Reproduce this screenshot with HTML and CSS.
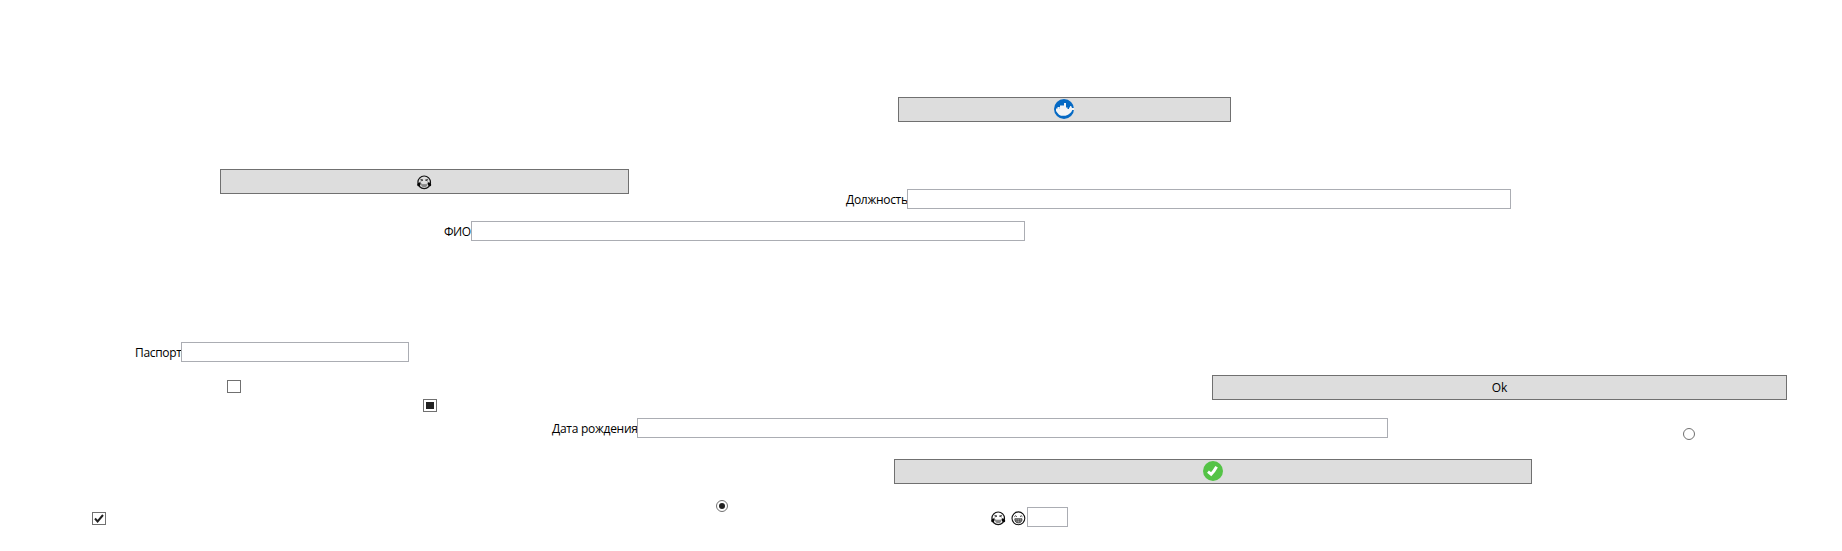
FILE: index.html
```html
<!DOCTYPE html>
<html lang="ru">
<head>
<meta charset="utf-8">
<title>Форма</title>
<link rel="stylesheet" href="styles.css">
</head>
<body>
<svg class="defs" width="0" height="0" aria-hidden="true">
  <symbol id="joy" viewBox="0 0 15 15">
    <circle cx="7.200" cy="7.300" r="6.300" fill="none" stroke="#111" stroke-width="1.200"/>
    <path d="M3.300 4.200 6 5.100 3.600 6M11.100 4.200 8.400 5.100 10.800 6" fill="none" stroke="#222" stroke-width=".8"/>
    <path d="M3.700 8h7c0 2.800-1.400 4.300-3.500 4.300S3.700 10.800 3.700 8z" fill="#888"/>
    <path d="M4.500 8.600h5.400" stroke="#eee" stroke-width=".9"/>
    <path d="M3.600 7.300C1.200 7.500.1 8.500.2 9.900c.1 1.300 2 1.700 2.900.6.500-.7.500-1.700.5-3.200zM10.800 7.300c2.400.2 3.500 1.200 3.400 2.600-.1 1.300-2 1.700-2.900.6-.5-.7-.5-1.700-.5-3.200z" fill="#050505"/>
  </symbol>
  <symbol id="grin" viewBox="0 0 15 15">
    <circle cx="7.400" cy="7.300" r="6.400" fill="none" stroke="#111" stroke-width="1.100"/>
    <path d="M3.400 5.700Q4.600 3.800 5.800 5.700M9 5.700Q10.200 3.800 11.400 5.700" fill="none" stroke="#222" stroke-width=".9"/>
    <path d="M3.800 7.800h7.200c0 2.900-1.600 4.100-3.600 4.100s-3.600-1.200-3.600-4.100z" fill="#aaa" stroke="#222" stroke-width=".8"/>
    <path d="M4 9.700h6.800M6.200 8v3.600M8.600 8v3.600" stroke="#333" stroke-width=".5"/>
  </symbol>
</svg>
<main class="canvas">
  <button class="button docker" aria-label="Docker">
    <svg width="20" height="20" viewBox="0 0 20 20"><circle cx="10" cy="10" r="10" fill="#0569c4"/><path d="M2 9.500h1.500V8H5v1h1V6.500h4V4h2v4.500h1V10h2V8.500h1V7l1.300.3.700 1.700H20v2h-1.700l-1 2-1.300 1.300-2 1.500-2.500 1H7l-2-1-1.700-2L2 12z" fill="#f2f4f6"/><path d="M13 8.500h1V10h-1z" fill="#7eade0"/><path d="M5 8h1v2H5z" fill="#b9d3ed"/></svg>
  </button>
  <button class="button smile" aria-label="Смех"><svg width="15" height="15"><use href="#joy"/></svg></button>
  <label class="field position"><span class="caption">Должность</span><input class="input" type="text"></label>
  <label class="field name"><span class="caption">ФИО</span><input class="input" type="text"></label>
  <label class="field passport"><span class="caption">Паспорт</span><input class="input" type="text"></label>
  <span class="check empty" role="checkbox" aria-checked="false"></span>
  <span class="check mixed" role="checkbox" aria-checked="mixed"></span>
  <button class="button ok">Ok</button>
  <label class="field birth"><span class="caption">Дата рождения</span><input class="input" type="text"></label>
  <span class="radio off" role="radio" aria-checked="false"></span>
  <button class="button accept" aria-label="Принять">
    <svg width="20" height="20" viewBox="0 0 20 20"><circle cx="10" cy="10" r="10" fill="#54c346"/><path d="M5 10.600 8.200 13.200Q11 10.500 13.600 5.800" fill="none" stroke="#fff" stroke-width="2.900"/></svg>
  </button>
  <span class="radio on" role="radio" aria-checked="true"></span>
  <span class="check checked" role="checkbox" aria-checked="true">
    <svg width="12" height="11" viewBox="0 0 12 11"><path d="M2 5.500 4.600 8.400 10 2" fill="none" stroke="#212121" stroke-width="2"/></svg>
  </span>
  <label class="field mood"><span class="icons"><svg width="15" height="15"><use href="#joy"/></svg><svg width="15" height="15"><use href="#grin"/></svg></span><input class="input" type="text"></label>
</main>
</body>
</html>
```
FILE: styles.css
```css
* { box-sizing: border-box; }
body { margin: 0; background: #fff; }
.defs { position: absolute; }

/* Free-form canvas: every control keeps its own place. */
.canvas {
  position: relative;
  height: 551px;
  overflow: hidden;
  color: #000;
  font: 12px/16px "Open Sans", "Noto Sans", sans-serif;
}
.button, .field, .check, .radio { position: absolute; }

.button {
  display: flex;
  align-items: center;
  justify-content: center;
  height: 25px;
  padding: 0;
  border: 1px solid #707070;
  border-radius: 0;
  background: #ddd;
  color: #000;
  font: inherit;
}
.button svg { display: block; }
.docker { left: 898px; top: 97px; width: 333px; padding-right: 1px; }
.docker svg, .accept svg { margin-bottom: 1px; }
.smile { left: 220px; top: 169px; width: 409px; }
.smile svg { margin-top: 1px; }
.ok { left: 1212px; top: 375px; width: 575px; }
.accept { left: 894px; top: 459px; width: 638px; }

.field { display: flex; height: 20px; }
.caption { flex: none; padding-top: 3px; white-space: nowrap; }
.input {
  flex: 1;
  min-width: 0;
  height: 20px;
  margin: 0;
  padding: 0 2px;
  border: 1px solid #abadb3;
  border-radius: 0;
  background: #fff;
  font: inherit;
}
.position { left: 846px; top: 189px; width: 665px; }
.position .caption { width: 61px; letter-spacing: -0.3px; }
.name { left: 444px; top: 221px; width: 581px; }
.name .caption { width: 27px; letter-spacing: -0.5px; }
.passport { left: 135px; top: 342px; width: 274px; }
.passport .caption { width: 46px; letter-spacing: -0.33px; }
.birth { left: 552px; top: 418px; width: 836px; }
.birth .caption { width: 85px; letter-spacing: -0.27px; }
.mood { left: 991px; top: 507px; width: 77px; }
.icons { display: flex; gap: 5px; width: 36px; padding-top: 4px; }

.check {
  display: grid;
  place-items: center;
  width: 14px;
  height: 13px;
  border: 1px solid #707070;
  background: #fff;
}
.empty { left: 227px; top: 380px; }
.mixed { left: 423px; top: 399px; }
.mixed::after { content: ""; width: 8px; height: 7px; background: #212121; }
.checked { left: 92px; top: 512px; }
.checked svg { display: block; }

.radio {
  display: grid;
  place-items: center;
  width: 12px;
  height: 12px;
  border: 1px solid #707070;
  border-radius: 50%;
}
.off { left: 1683px; top: 428px; }
.on { left: 716px; top: 500px; }
.on::after { content: ""; width: 6px; height: 6px; border-radius: 50%; background: #212121; }
```
